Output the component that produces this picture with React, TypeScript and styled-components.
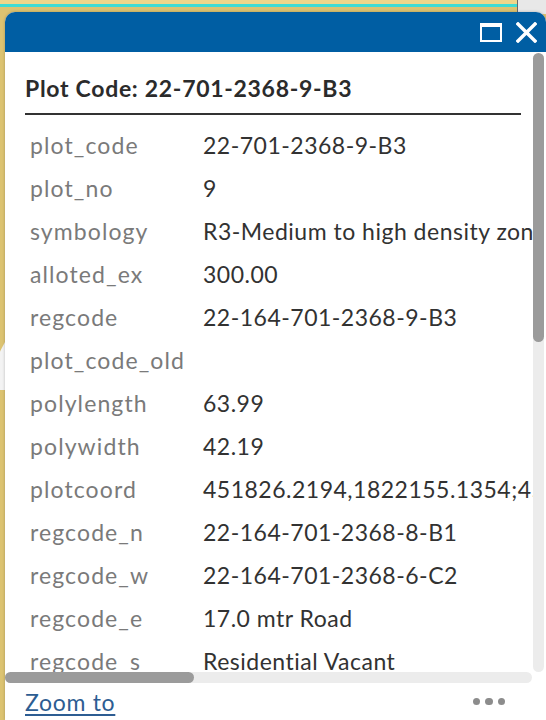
import React from "react";
import styled, { createGlobalStyle } from "styled-components";

const Global = createGlobalStyle`
  html, body { margin: 0; padding: 0; }
  body { width: 546px; height: 720px; overflow: hidden; background: #dcc371; font-family: Lato, "Open Sans", sans-serif; }
`;

const MapCanvas = styled.div`
  position: relative;
  width: 546px;
  height: 720px;
  box-sizing: border-box;
  padding: 12px 0 0 5px;
  background: #dcc371;
  overflow: hidden;
`;

const TopBand = styled.div`
  position: absolute;
  left: 0;
  top: 0;
  width: 517px;
  height: 4px;
  background: #eed68a;
`;

const CyanLine = styled.div`
  position: absolute;
  left: 0;
  top: 4px;
  width: 517px;
  height: 3px;
  background: #3fdcd4;
`;

const GrayCorner = styled.div`
  position: absolute;
  left: 517px;
  top: 0;
  width: 29px;
  height: 14px;
  background: #e8e8e8;
  border-left: 1px solid #6a6a6a;
`;

const SidePanel = styled.div`
  position: absolute;
  left: 0;
  top: 342px;
  width: 5px;
  height: 48px;
  background: #f3f3f3;
  clip-path: polygon(100% 0, 100% 100%, 0 100%, 0 20%);
`;

const Popup = styled.div`
  position: relative;
  width: 541px;
  height: 708px;
  display: flex;
  flex-direction: column;
  background: #ffffff;
  border-radius: 10px 10px 0 0;
  overflow: hidden;
  box-shadow: 0 0 3px rgba(0, 0, 0, 0.25);
`;

const Header = styled.div`
  height: 40px;
  flex: none;
  background: #005ea3;
  display: flex;
  align-items: center;
  justify-content: flex-end;
  gap: 14px;
  padding-right: 9px;
`;

const MaxIcon = styled.div`
  width: 22px;
  height: 19px;
  box-sizing: border-box;
  border: 2px solid #ffffff;
  border-top-width: 4px;
`;

const CloseIcon = styled.svg`
  width: 21px;
  height: 21px;
  display: block;
`;

const Body = styled.div`
  flex: 1;
  display: grid;
  grid-template-columns: 528px 11px;
  grid-template-rows: 620px 11px;
`;

const Viewport = styled.div`
  overflow: hidden;
  position: relative;
`;

const Content = styled.div`
  padding: 21px 0 0 20px;
  white-space: nowrap;
`;

const Title = styled.h2`
  margin: 0;
  width: 496px;
  height: 30px;
  line-height: 30px;
  padding-bottom: 10px;
  border-bottom: 2px solid #323232;
  font-size: 23px;
  font-weight: 700;
  color: #2b2b2b;
  letter-spacing: 0.7px;
`;

const Table = styled.div`
  margin-top: 9px;
  display: grid;
  grid-template-columns: 178px auto;
`;

const Label = styled.div`
  padding-left: 5px;
  height: 43px;
  line-height: 43px;
  font-size: 23px;
  letter-spacing: 1.1px;
  color: #7a7a7a;
`;

const Value = styled.div`
  height: 43px;
  line-height: 43px;
  font-size: 23px;
  letter-spacing: 0.5px;
  color: #323232;
`;

const VTrack = styled.div`
  margin-top: 1px;
  background: #ececec;
  border-radius: 6px;
  display: flex;
  flex-direction: column;
`;

const VThumb = styled.div`
  height: 289px;
  background: #9b9b9b;
  border-radius: 6px;
`;

const HTrack = styled.div`
  background: #ececec;
  border-radius: 6px;
  display: flex;
  width: 527px;
`;

const HThumb = styled.div`
  width: 189px;
  background: #9b9b9b;
  border-radius: 6px;
`;

const Footer = styled.div`
  height: 37px;
  flex: none;
  display: flex;
  align-items: center;
  justify-content: space-between;
  padding: 0 41px 0 20px;
`;

const ZoomLink = styled.a`
  font-size: 23px;
  letter-spacing: 0.7px;
  color: #2d5d92;
  text-decoration: underline;
  text-underline-offset: 3px;
  text-decoration-thickness: 1.5px;
  cursor: pointer;
`;

const Dots = styled.div`
  display: flex;
  gap: 5px;
`;

const Dot = styled.span`
  width: 7.5px;
  height: 7.5px;
  border-radius: 50%;
  background: #8c8c8c;
`;

const rows: [string, string][] = [
  ["plot_code", "22-701-2368-9-B3"],
  ["plot_no", "9"],
  ["symbology", "R3-Medium to high density zone"],
  ["alloted_ex", "300.00"],
  ["regcode", "22-164-701-2368-9-B3"],
  ["plot_code_old", ""],
  ["polylength", "63.99"],
  ["polywidth", "42.19"],
  ["plotcoord", "451826.2194,1822155.1354;451869.0123,1822198.4411"],
  ["regcode_n", "22-164-701-2368-8-B1"],
  ["regcode_w", "22-164-701-2368-6-C2"],
  ["regcode_e", "17.0 mtr Road"],
  ["regcode_s", "Residential Vacant"],
  ["shape_area", "2699.73"],
];

export default function App() {
  return (
    <MapCanvas>
      <Global />
      <TopBand />
      <CyanLine />
      <GrayCorner />
      <SidePanel />
      <Popup>
        <Header>
          <MaxIcon />
          <CloseIcon viewBox="0 0 21 21">
            <path d="M2 2 L19 19 M19 2 L2 19" stroke="#ffffff" strokeWidth="3.4" strokeLinecap="square" />
          </CloseIcon>
        </Header>
        <Body>
          <Viewport>
            <Content>
              <Title>Plot Code: 22-701-2368-9-B3</Title>
              <Table>
                {rows.map(([k, v]) => (
                  <React.Fragment key={k}>
                    <Label>{k}</Label>
                    <Value>{v}</Value>
                  </React.Fragment>
                ))}
              </Table>
            </Content>
          </Viewport>
          <VTrack>
            <VThumb />
          </VTrack>
          <HTrack>
            <HThumb />
          </HTrack>
          <div />
        </Body>
        <Footer>
          <ZoomLink>Zoom to</ZoomLink>
          <Dots>
            <Dot />
            <Dot />
            <Dot />
          </Dots>
        </Footer>
      </Popup>
    </MapCanvas>
  );
}
